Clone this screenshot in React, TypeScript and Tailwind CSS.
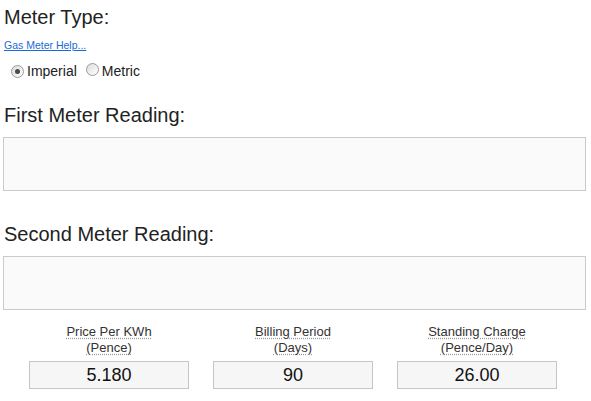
import React from "react";

function Radio({ checked }: { checked?: boolean }) {
  return (
    <span className="inline-flex h-[13px] w-[13px] items-center justify-center rounded-full border border-[#9a9a9a] bg-gradient-to-br from-[#dcdcdc] to-[#ffffff]">
      {checked ? <span className="h-[5px] w-[5px] rounded-full bg-[#4a4a4a]" /> : null}
    </span>
  );
}

function Field({ label1, label2, value }: { label1: string; label2: string; value: string }) {
  return (
    <div className="flex w-[184px] flex-col items-center">
      <div className="flex flex-col items-center text-[13px] leading-[16px] text-[#333333]">
        <span className="underline decoration-dotted decoration-[#999999] underline-offset-2">{label1}</span>
        <span className="underline decoration-dotted decoration-[#999999] underline-offset-2">{label2}</span>
      </div>
      <div className="mt-[5px] flex h-[28px] w-[160px] items-center justify-center border border-[#c6c6c6] bg-[#f6f6f6] text-[18px] leading-[20px] text-[#111111]">
        {value}
      </div>
    </div>
  );
}

export default function App() {
  return (
    <div
      className="h-[401px] w-[591px] overflow-hidden bg-white text-[#222222]"
      style={{ fontFamily: '"Liberation Sans", Arial, sans-serif' }}
    >
      <div className="px-[3px]">
        <h2 className="mt-[6px] pl-[1px] text-[20px] leading-[23px]">Meter Type:</h2>
        <a href="#" className="mt-[10px] block pl-[1px] text-[10.5px] leading-[12px] text-[#1a6ad8] underline">
          Gas Meter Help...
        </a>
        <div className="mt-[12px] flex items-center pl-[8px] text-[14px] leading-[16px] text-[#222222]">
          <Radio checked />
          <span className="ml-[3px]">Imperial</span>
          <span className="ml-[9px]">
            <Radio />
          </span>
          <span className="ml-[3px]">Metric</span>
        </div>
        <h2 className="mt-[25px] pl-[1px] text-[20px] leading-[23px]">First Meter Reading:</h2>
        <div className="mt-[10px] h-[54px] w-[583px] border border-[#cbcbcb] bg-[#fafafa]" />
        <h2 className="mt-[32px] pl-[1px] text-[20px] leading-[23px]">Second Meter Reading:</h2>
        <div className="mt-[10px] h-[54px] w-[583px] border border-[#cbcbcb] bg-[#fafafa]" />
      </div>
      <div className="mt-[14px] flex pl-[17px]">
        <Field label1="Price Per KWh" label2="(Pence)" value="5.180" />
        <Field label1="Billing Period" label2="(Days)" value="90" />
        <Field label1="Standing Charge" label2="(Pence/Day)" value="26.00" />
      </div>
    </div>
  );
}
